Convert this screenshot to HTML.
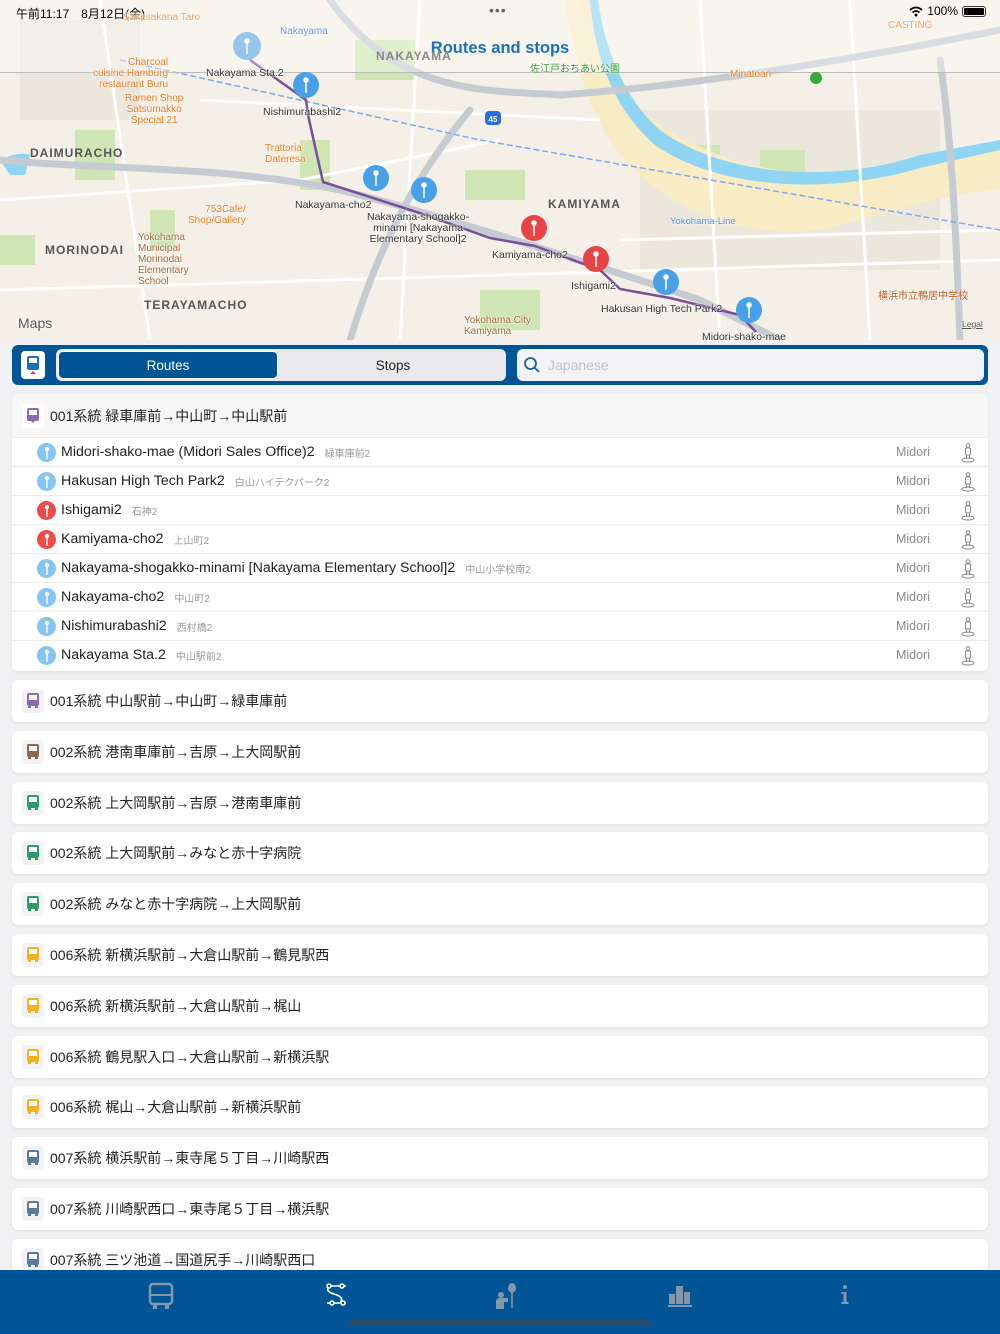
<!DOCTYPE html>
<html><head><meta charset="utf-8">
<style>
*{box-sizing:border-box;margin:0;padding:0}
body{width:1000px;height:1334px;overflow:hidden;background:#f1f1f3;font-family:"Liberation Sans","Noto Sans CJK JP",sans-serif;position:relative}
#map{position:absolute;left:0;top:0;width:1000px;height:340px;overflow:hidden;background:#f4f0e7}
.bar{position:absolute;left:12px;top:345px;width:976px;height:40px;background:#005596;border-radius:6px}
.card{position:absolute;left:12px;width:976px;background:#fff;border-radius:6px;box-shadow:0 1px 3px rgba(0,0,0,.08)}
.rt{height:42px;display:flex;align-items:center;font-size:14px;color:#222}
.bi{width:22px;height:24px;margin:0 6px 0 10px;background:#f2f2f4;border-radius:4px;display:flex;align-items:center;justify-content:center}
.row{position:relative;height:29px;border-top:1px solid #eaeaec;display:flex;align-items:center;font-size:14.2px;color:#222}
.pin{width:19px;height:19px;border-radius:50%;margin:0 5px 0 25px;display:flex;align-items:center;justify-content:center}
.sub{font-size:10px;color:#999;margin-left:10px}
.mid{position:absolute;right:58px;font-size:12.5px;color:#8a8a8e}
.ped{position:absolute;right:12px;top:5px}
.ml{position:absolute;font-size:10.5px;color:#333;white-space:nowrap;text-shadow:0 0 2px #fff,0 0 2px #fff}
.or{color:#f07a20;font-size:10px;line-height:11px}
.dist{position:absolute;font-size:12px;color:#555;letter-spacing:1px;font-weight:bold}
</style></head><body>
<div id="map">
<svg width="1000" height="340" viewBox="0 0 1000 340" style="position:absolute;left:0;top:0">
<rect width="1000" height="340" fill="#f4f0e7"/>
<g fill="#ebe7dd">
<rect x="640" y="110" width="300" height="160"/><rect x="20" y="20" width="120" height="100"/>
</g>
<g fill="#cfe6b4">
<rect x="75" y="130" width="40" height="50"/><rect x="150" y="210" width="25" height="40"/><rect x="300" y="140" width="30" height="50"/>
<rect x="670" y="145" width="50" height="40"/><rect x="760" y="150" width="45" height="35"/><rect x="465" y="170" width="60" height="30"/>
<rect x="355" y="40" width="60" height="40"/><rect x="480" y="290" width="60" height="40"/><rect x="0" y="235" width="35" height="30"/>
<rect x="950" y="150" width="50" height="40"/>
</g>
<path d="M590 0 C600 40 610 80 640 110 C700 160 800 190 900 165 C940 155 970 150 1000 150 L1000 190 C960 190 900 210 820 230 C730 240 650 200 610 140 C585 100 575 60 565 0Z" fill="#f7ecc4"/>
<path d="M598 0 C605 50 625 100 660 130 C720 175 830 185 920 155 L1000 140 L1000 150 L920 168 C830 195 720 190 655 145 C615 110 595 60 590 0Z" fill="#8fd4f2"/>
<path d="M0 160 C0 160 20 150 30 155 L25 175 L10 175Z" fill="#8fd4f2"/>
<g stroke="#fff" stroke-width="3" fill="none">
<path d="M0 200 L300 180 L500 140"/><path d="M100 0 L150 340"/><path d="M420 0 L400 340"/><path d="M0 290 L1000 260"/><path d="M700 0 L720 340"/><path d="M850 0 L870 340"/><path d="M200 100 L600 120"/><path d="M620 240 L1000 230"/>
</g>
<g stroke="#c5cbd1" stroke-width="7" fill="none" stroke-linecap="round">
<path d="M330 0 C400 100 500 90 560 95 C700 85 850 60 1000 30"/>
<path d="M0 160 C100 170 220 165 340 190 C420 210 550 250 700 300 L780 340"/>
<path d="M470 110 C420 170 380 240 350 340"/>
<path d="M940 60 C950 130 955 200 960 340"/>
</g>
<path d="M120 60 L480 140 L1000 230" stroke="#7fa8f0" stroke-width="1.5" stroke-dasharray="6 3" fill="none"/>
<path d="M250 60 L306 100 L308 115 L323 182 L420 213 L490 238 L535 246 L600 270 L620 289 L670 298 L740 315 L756 332" stroke="#7a4f9a" stroke-width="2.5" fill="none"/>
<rect x="0" y="0" width="1000" height="72" fill="#fff" opacity=".35"/>
<line x1="0" y1="72.5" x2="1000" y2="72.5" stroke="#bbb" stroke-width="1"/>
<g>
<circle cx="247" cy="46" r="14" fill="#7db8ef" opacity=".8"/>
<circle cx="306" cy="85" r="13" fill="#4aa0e6"/>
<circle cx="376" cy="178" r="13" fill="#4aa0e6"/>
<circle cx="424" cy="190" r="13" fill="#4aa0e6"/>
<circle cx="534" cy="228" r="13" fill="#e94444"/>
<circle cx="596" cy="259" r="13" fill="#e94444"/>
<circle cx="666" cy="282" r="13" fill="#4aa0e6"/>
<circle cx="749" cy="310" r="13" fill="#4aa0e6"/>
</g>
<g stroke="#fff" stroke-width="1.5" fill="#fff">
<line x1="247" y1="42" x2="247" y2="54"/><circle cx="247" cy="41" r="2"/>
<line x1="306" y1="81" x2="306" y2="93"/><circle cx="306" cy="80" r="2"/>
<line x1="376" y1="174" x2="376" y2="186"/><circle cx="376" cy="173" r="2"/>
<line x1="424" y1="186" x2="424" y2="198"/><circle cx="424" cy="185" r="2"/>
<line x1="534" y1="224" x2="534" y2="236"/><circle cx="534" cy="223" r="2"/>
<line x1="596" y1="255" x2="596" y2="267"/><circle cx="596" cy="254" r="2"/>
<line x1="666" y1="278" x2="666" y2="290"/><circle cx="666" cy="277" r="2"/>
<line x1="749" y1="306" x2="749" y2="318"/><circle cx="749" cy="305" r="2"/>
</g>
<rect x="485" y="111" width="16" height="14" rx="4" fill="#2a6fe0"/><text x="493" y="122" font-size="8" fill="#fff" text-anchor="middle" font-family="Liberation Sans" font-weight="bold">45</text>
<circle cx="816" cy="78" r="6" fill="#3aaa3a"/>
</svg>
<div style="position:absolute;left:16px;top:5px;font-size:12px;color:#000">午前11:17　8月12日(金)</div>
<div style="position:absolute;left:489px;top:2px;font-size:14px;color:#666;letter-spacing:1px">•••</div>
<div style="position:absolute;right:14px;top:4px;font-size:12px;color:#000;display:flex;align-items:center;gap:4px">
<svg width="14" height="11" viewBox="0 0 14 11"><path d="M1 4 Q7 -1 13 4" stroke="#000" stroke-width="1.8" fill="none"/><path d="M3.5 6.5 Q7 3.5 10.5 6.5" stroke="#000" stroke-width="1.8" fill="none"/><circle cx="7" cy="9" r="1.5"/></svg>100%
<span style="display:inline-block;width:24px;height:11px;border:1px solid #333;border-radius:3px;padding:1px"><span style="display:block;width:100%;height:100%;background:#000;border-radius:1px"></span></span></div>
<div style="position:absolute;left:0;width:1000px;top:39px;text-align:center;font-size:16.5px;font-weight:bold;color:#1a6fc0">Routes and stops</div>
<div class="ml" style="left:206px;top:67px">Nakayama Sta.2</div>
<div class="ml" style="left:263px;top:106px">Nishimurabashi2</div>
<div class="ml" style="left:295px;top:199px">Nakayama-cho2</div>
<div class="ml" style="left:367px;top:212px;text-align:center;line-height:11px">Nakayama-shogakko-<br>minami [Nakayama<br>Elementary School]2</div>
<div class="ml" style="left:492px;top:249px">Kamiyama-cho2</div>
<div class="ml" style="left:571px;top:280px">Ishigami2</div>
<div class="ml" style="left:601px;top:303px">Hakusan High Tech Park2</div>
<div class="ml" style="left:702px;top:331px">Midori-shako-mae</div>
<div class="dist" style="left:30px;top:146px">DAIMURACHO</div>
<div class="dist" style="left:45px;top:243px">MORINODAI</div>
<div class="dist" style="left:144px;top:298px">TERAYAMACHO</div>
<div class="dist" style="left:548px;top:197px">KAMIYAMA</div>
<div class="dist" style="left:376px;top:49px;color:#888">NAKAYAMA</div>
<div class="ml or" style="left:93px;top:57px;text-align:right">Charcoal<br>cuisine Hamburg<br>restaurant Buru</div>
<div class="ml or" style="left:125px;top:93px;text-align:center">Ramen Shop<br>Satsumakko<br>Special 21</div>
<div class="ml or" style="left:265px;top:143px">Trattoria<br>Dateresa</div>
<div class="ml or" style="left:188px;top:204px;text-align:right">753Cafe/<br>Shop/Gallery</div>
<div class="ml or" style="left:138px;top:232px;color:#a06a40">Yokohama<br>Municipal<br>Morinodai<br>Elementary<br>School</div>
<div class="ml or" style="left:464px;top:315px;color:#a06a40">Yokohama City<br>Kamiyama</div>
<div class="ml or" style="left:730px;top:69px">Minatoan</div>
<div class="ml or" style="left:878px;top:291px;color:#b35a20">横浜市立鴨居中学校</div>
<div class="ml or" style="left:530px;top:64px;color:#3a9a3a">佐江戸おちあい公園</div>
<div class="ml or" style="left:888px;top:20px;color:#f0a060">CASTING</div>
<div class="ml or" style="left:123px;top:12px;color:#f0a060">Sakesakana Taro</div>
<div class="ml" style="left:280px;top:26px;color:#6a9ad8;font-size:10px">Nakayama</div>
<div class="ml" style="left:670px;top:216px;color:#5a8ae0;font-size:9.5px">Yokohama-Line</div>
<div class="ml" style="left:18px;top:315px;font-size:14px;color:#555">Maps</div>
<div class="ml" style="left:962px;top:319px;font-size:8.5px;color:#555;text-decoration:underline">Legal</div>
</div>

<div class="bar">
<div style="position:absolute;left:9px;top:6px;width:24px;height:28px;background:#fff;border-radius:4px;display:flex;align-items:center;justify-content:center">
<svg width="16" height="20" viewBox="0 0 16 20"><rect x="2" y="1" width="12" height="14" rx="2" fill="#1a6fc0"/><rect x="4" y="3" width="8" height="5" fill="#fff"/><polygon points="8,16 5,19 11,19" fill="#e33"/></svg></div>
<div style="position:absolute;left:44px;top:4px;width:450px;height:32px;background:#e9e9eb;border-radius:6px"></div>
<div style="position:absolute;left:46px;top:6px;width:220px;height:28px;background:#005596;border-radius:5px;border:1px solid #fff;color:#fff;font-size:13.5px;display:flex;align-items:center;justify-content:center">Routes</div>
<div style="position:absolute;left:270px;top:6px;width:222px;height:28px;color:#222;font-size:13.5px;display:flex;align-items:center;justify-content:center">Stops</div>
<div style="position:absolute;left:505px;top:4px;width:467px;height:32px;background:#f2f2f7;border-radius:6px;display:flex;align-items:center;font-size:14px;color:#c2c2c6">
<svg width="18" height="18" viewBox="0 0 18 18" style="margin:0 7px 0 6px"><circle cx="7.5" cy="7.5" r="5.5" stroke="#1a5f9e" stroke-width="1.8" fill="none"/><line x1="11.5" y1="11.5" x2="16" y2="16" stroke="#1a5f9e" stroke-width="1.8"/></svg>Japanese</div>
</div>

<div class="card" style="top:394px;height:277px">
<div class="rt" style="height:43px;background:#f7f7f8;border-radius:6px 6px 0 0"><div class="bi" style="background:#fff"><svg width="14" height="18" viewBox="0 0 14 18"><rect x="1" y="1" width="12" height="13" rx="2" fill="#8b6bb1"/><rect x="3" y="3" width="8" height="5" fill="#fff"/><polygon points="7,16 5,14 9,14" fill="#8b6bb1"/></svg></div>001系統 緑車庫前→中山町→中山駅前</div>
</div>
<div id="rows" style="position:absolute;left:12px;top:437px;width:976px"></div>

<div id="list"></div>

<div style="position:absolute;left:0;top:1270px;width:1000px;height:64px;background:#005596">
<svg style="position:absolute;left:148px;top:12px" width="26" height="28" viewBox="0 0 26 28"><rect x="2" y="2" width="22" height="20" rx="3" stroke="#8496ab" stroke-width="2.4" fill="none"/><line x1="2" y1="13" x2="24" y2="13" stroke="#8496ab" stroke-width="2"/><rect x="5" y="22" width="4" height="5" fill="#8496ab"/><rect x="17" y="22" width="4" height="5" fill="#8496ab"/></svg>
<svg style="position:absolute;left:324px;top:12px" width="26" height="26" viewBox="0 0 26 26" stroke="#fff" fill="none" stroke-width="1.6"><path d="M3 4 H22 M5 4 C2 8 4 10 10 12 C16 14 20 16 16 21 M3 21 H22"/><circle cx="5" cy="4" r="2" fill="#005596"/><circle cx="18" cy="4" r="2" fill="#005596"/><circle cx="8" cy="21" r="2" fill="#005596"/><circle cx="19" cy="21" r="2" fill="#005596"/></svg>
<svg style="position:absolute;left:494px;top:12px" width="26" height="28" viewBox="0 0 26 28" fill="#8496ab"><ellipse cx="18" cy="6" rx="4" ry="5"/><rect x="17.2" y="10" width="1.6" height="16"/><circle cx="7" cy="13" r="3"/><path d="M2 27 V19 Q2 16 6 16 H14 V20 H10 V27Z"/></svg>
<svg style="position:absolute;left:667px;top:12px" width="26" height="26" viewBox="0 0 26 26" fill="#8496ab"><rect x="2" y="12" width="6" height="10"/><rect x="9" y="4" width="7" height="18"/><rect x="17" y="10" width="6" height="12"/><rect x="1" y="23" width="24" height="2"/></svg>
<svg style="position:absolute;left:838px;top:14px" width="14" height="22" viewBox="0 0 14 22" fill="#8496ab"><circle cx="7" cy="3" r="2"/><rect x="5.5" y="8" width="3" height="12"/><rect x="3.5" y="8" width="4" height="2"/><rect x="3.5" y="18" width="7" height="2"/></svg>
<div style="position:absolute;left:348px;top:50px;width:304px;height:5px;border-radius:3px;background:#2b4a66"></div>
</div>

<script>
var stops=[["Midori-shako-mae (Midori Sales Office)2","緑車庫前2","b"],["Hakusan High Tech Park2","白山ハイテクパーク2","b"],["Ishigami2","石神2","r"],["Kamiyama-cho2","上山町2","r"],["Nakayama-shogakko-minami [Nakayama Elementary School]2","中山小学校南2","b"],["Nakayama-cho2","中山町2","b"],["Nishimurabashi2","西村橋2","b"],["Nakayama Sta.2","中山駅前2","b"]];
var h="";stops.forEach(function(s){h+='<div class="row"><div class="pin" style="background:'+(s[2]=="r"?"#ee4b4b":"#86c4f4")+'"><svg width="6" height="13" viewBox="0 0 6 13"><circle cx="3" cy="3" r="2.2" fill="#fff"/><rect x="2.3" y="4" width="1.4" height="9" fill="#fff"/></svg></div>'+s[0]+'<span class="sub">'+s[1]+'</span><span class="mid">Midori</span><svg class="ped" width="16" height="20" viewBox="0 0 16 20" fill="none" stroke="#888" stroke-width="1"><circle cx="8" cy="2.5" r="1.8"/><rect x="5.5" y="5" width="5" height="7" rx="1"/><path d="M6.5 12 V16 M9.5 12 V16"/><ellipse cx="8" cy="17" rx="6" ry="2"/></svg></div>'});
document.getElementById("rows").innerHTML=h;
var routes=[["001系統 中山駅前→中山町→緑車庫前","#8b6bb1"],["002系統 港南車庫前→吉原→上大岡駅前","#8a6a55"],["002系統 上大岡駅前→吉原→港南車庫前","#2e9a6a"],["002系統 上大岡駅前→みなと赤十字病院","#2e9a6a"],["002系統 みなと赤十字病院→上大岡駅前","#2e9a6a"],["006系統 新横浜駅前→大倉山駅前→鶴見駅西","#f5b21f"],["006系統 新横浜駅前→大倉山駅前→梶山","#f5b21f"],["006系統 鶴見駅入口→大倉山駅前→新横浜駅","#f5b21f"],["006系統 梶山→大倉山駅前→新横浜駅前","#f5b21f"],["007系統 横浜駅前→東寺尾５丁目→川崎駅西","#5a7a95"],["007系統 川崎駅西口→東寺尾５丁目→横浜駅","#5a7a95"],["007系統 三ツ池道→国道尻手→川崎駅西口","#5a7a95"]];
var l="";routes.forEach(function(r,i){l+='<div class="card rt" style="top:'+(680+i*50.8)+'px"><div class="bi"><svg width="14" height="18" viewBox="0 0 14 18"><rect x="1" y="1" width="12" height="13" rx="2" fill="'+r[1]+'"/><rect x="3" y="3" width="8" height="5" fill="#fff"/><rect x="2" y="14" width="3" height="2" fill="'+r[1]+'"/><rect x="9" y="14" width="3" height="2" fill="'+r[1]+'"/></svg></div>'+r[0]+'</div>'});
document.getElementById("list").innerHTML=l;
</script>
</body></html>
